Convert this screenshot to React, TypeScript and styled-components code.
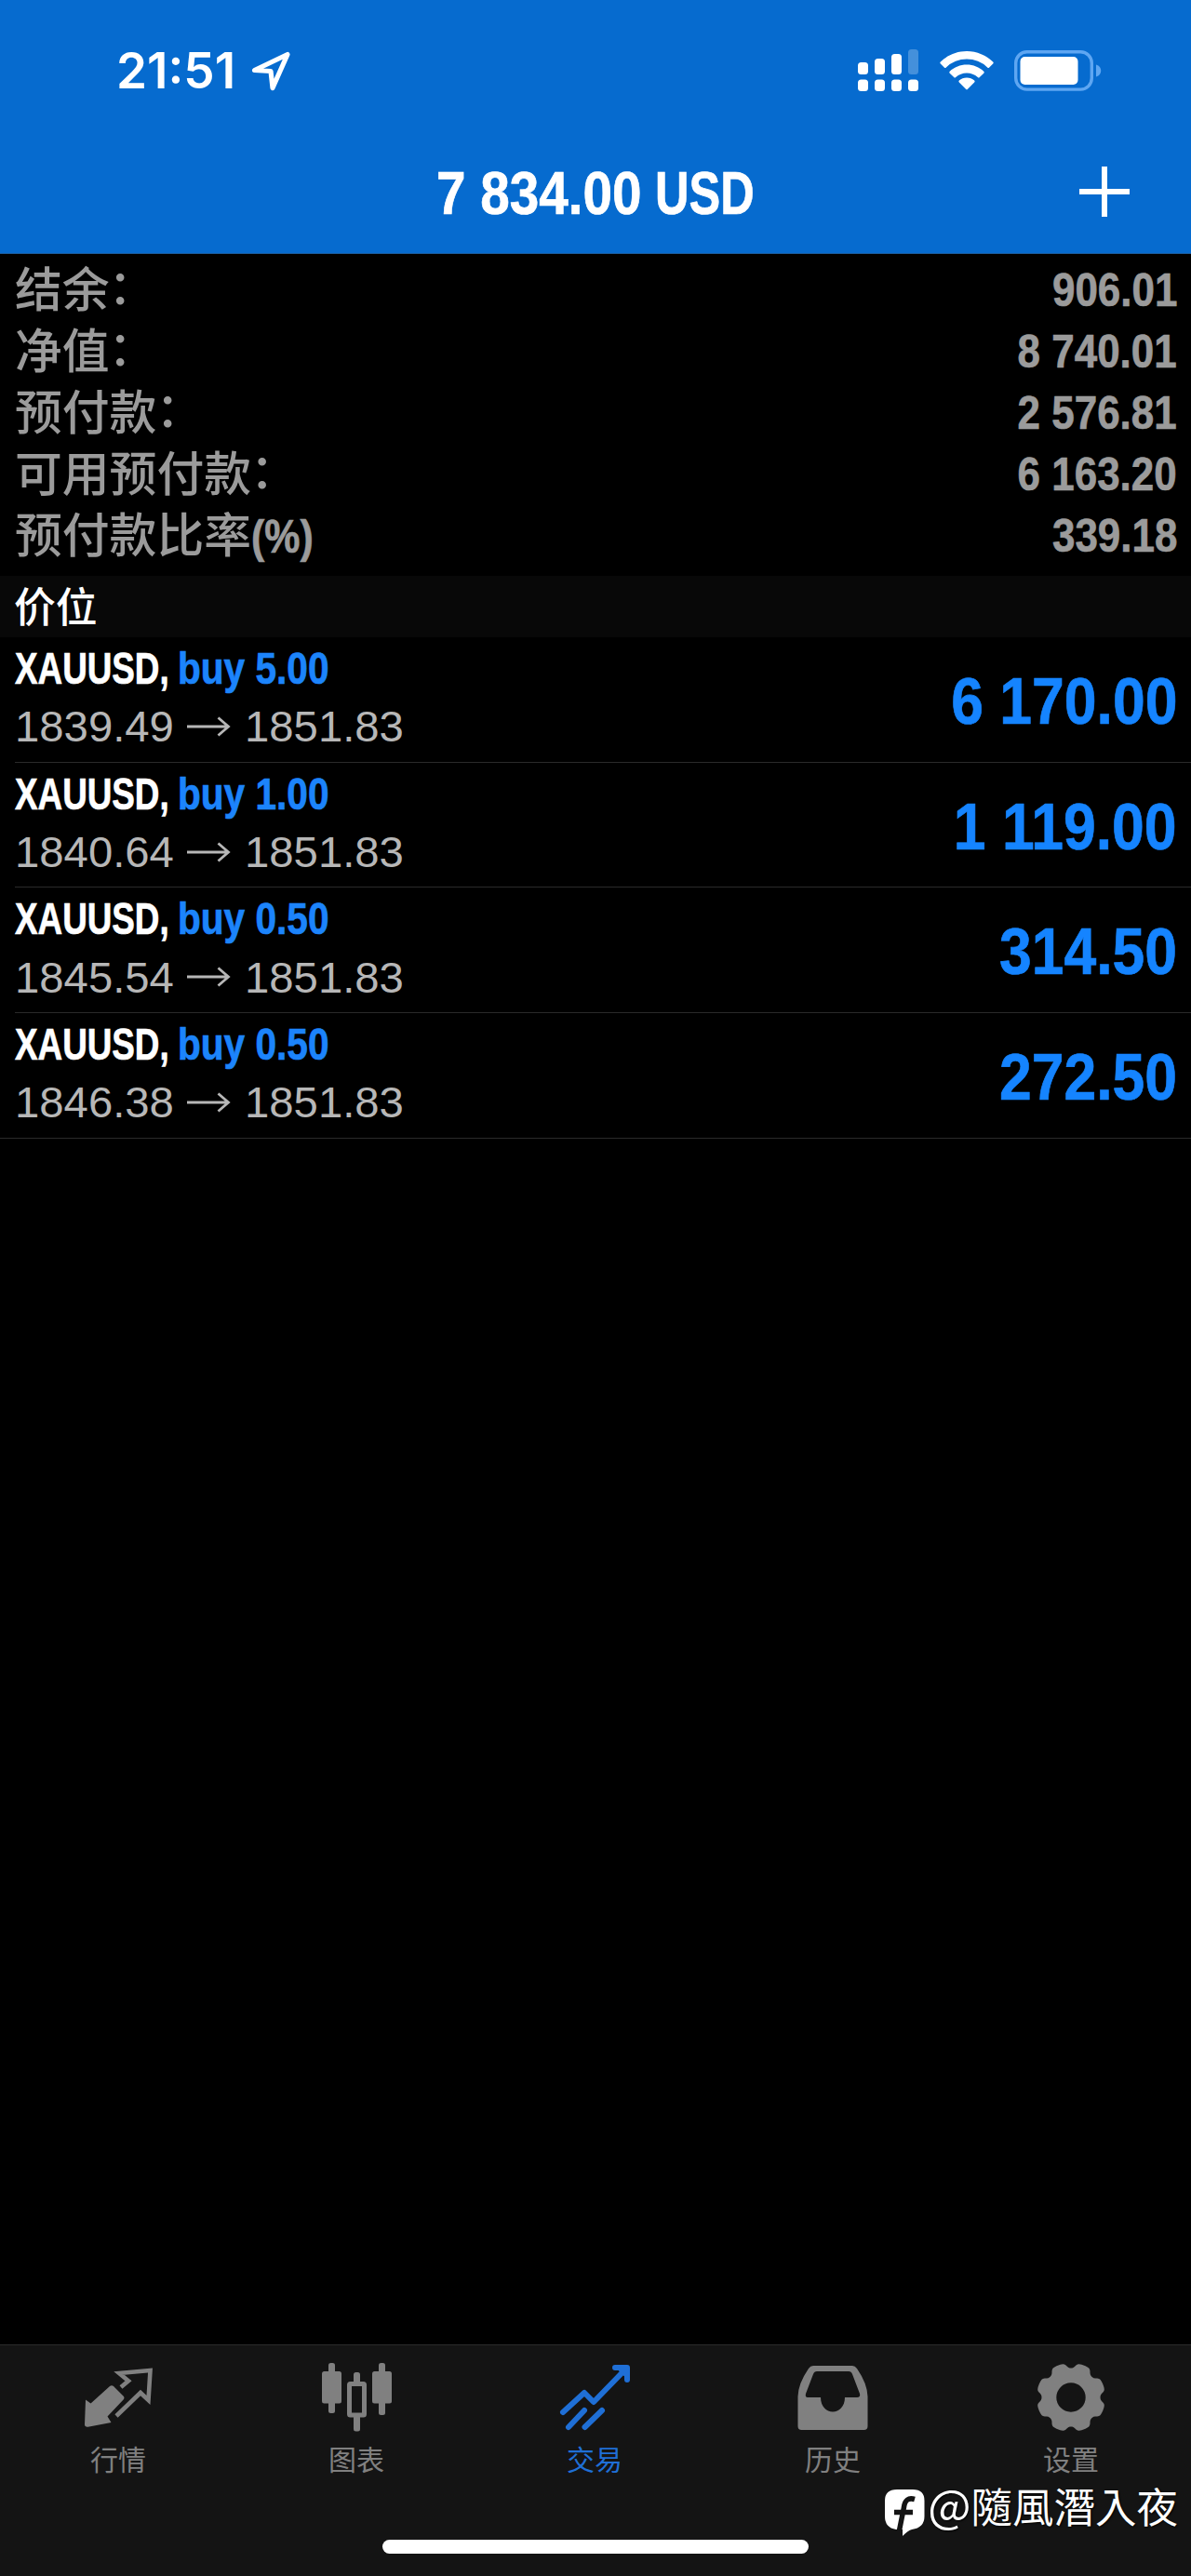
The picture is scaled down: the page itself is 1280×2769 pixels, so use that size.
import React from 'react';
import styled, { createGlobalStyle } from 'styled-components';

const GlobalStyle = createGlobalStyle`
  * { box-sizing: border-box; }
  body { margin: 0; background: #000; }
  svg { overflow: visible; flex: none; }
`;

const LATIN = '"Liberation Sans", "Noto Sans CJK SC", sans-serif';
const HAN = '"Noto Sans CJK SC", "Liberation Sans", sans-serif';

const Screen = styled.div`
  width: 1280px;
  height: 2769px;
  display: flex;
  flex-direction: column;
  background: #000;
  overflow: hidden;
  font-family: ${LATIN};
`;

const Header = styled.header`
  height: 273px;
  flex: none;
  display: flex;
  flex-direction: column;
  background: #066bcf;
  border-bottom: 1px solid #1c5c9c;
  color: #fff;
`;

const StatusBar = styled.div`
  height: 140px;
  display: flex;
  align-items: center;
  justify-content: space-between;
  padding: 12px 96px 0 125px;
`;

const StatusGroup = styled.div<{ $gap: number }>`
  display: flex;
  align-items: center;
  gap: ${(p) => p.$gap}px;
`;

const Clock = styled.span`
  width: 127px;
  font: 600 53px/60px Inter, sans-serif;
  letter-spacing: 0;
  white-space: nowrap;
`;

const NavBar = styled.div`
  height: 132px;
  display: grid;
  grid-template-columns: 1fr auto 1fr;
  align-items: center;
  padding: 0 66px;
`;

const AddButton = styled.button`
  grid-column: 3;
  justify-self: end;
  display: flex;
  padding: 0;
  border: 0;
  background: none;
  color: inherit;
`;

const Title = styled.h1`
  grid-column: 2;
  display: grid;
  grid-template-columns: 235px 105px;
  margin: 0;
  padding: 4px 3px 0 0;
`;

const Condensed = styled.span<{
  $size: number;
  $scale: number;
  $origin?: string;
  $color?: string;
  $weight?: number;
}>`
  display: inline-block;
  font-family: ${LATIN};
  font-size: ${(p) => p.$size}px;
  font-weight: ${(p) => p.$weight ?? 700};
  line-height: 1.15;
  white-space: pre;
  color: ${(p) => p.$color ?? 'inherit'};
  -webkit-text-stroke: ${(p) => (p.$weight === 400 ? 0 : 0.7)}px currentColor;
  transform: scaleX(${(p) => p.$scale});
  transform-origin: ${(p) => p.$origin ?? 'left'} center;
`;

const Profit = styled(Condensed)`
  margin-top: 5px;
`;

const Summary = styled.section`
  height: 346px;
  flex: none;
  padding: 7px 15px 0 16px;
  color: #9b9b9b;
`;

const SummaryRow = styled.div`
  height: 65.8px;
  display: flex;
  justify-content: space-between;
  align-items: center;
`;

const SummaryLabel = styled.span`
  height: 56px;
  margin-top: -9px;
  font: 500 50.8px/56px ${HAN};
  white-space: nowrap;
`;

const Colon = styled.span`
  display: inline-block;
  transform: translate(-1px, -3px);
`;

const SectionTitle = styled.h2`
  height: 66px;
  flex: none;
  margin: 0;
  padding-left: 15px;
  background: #080808;
  color: #fff;
  font: 500 44.8px/62px ${HAN};
`;

const Positions = styled.section`
  flex: 1;
`;

const Position = styled.div<{ $last: boolean }>`
  height: 134.7px;
  margin-left: ${(p) => (p.$last ? 0 : 16)}px;
  padding: 0 15px 0 ${(p) => (p.$last ? 16 : 0)}px;
  border-bottom: 1px solid #2a2a2a;
  display: flex;
  justify-content: space-between;
  align-items: center;
`;

const Details = styled.div`
  display: flex;
  flex-direction: column;
  padding-bottom: 3px;
`;

const Line = styled.div`
  height: 62px;
  display: flex;
  align-items: center;
  white-space: nowrap;
`;

const SymbolCell = styled.div`
  width: 175px;
`;

const PriceCell = styled.div`
  width: 185px;
`;

const ArrowCell = styled.div`
  width: 62px;
  display: flex;
  padding-bottom: 1px;
`;

const TabBar = styled.nav`
  height: 249px;
  flex: none;
  background: #141414;
  border-top: 1px solid #2b2b2b;
  display: flex;
  flex-direction: column;
  align-items: center;
  position: relative;
`;

const Tabs = styled.div`
  width: 1280px;
  height: 209px;
  margin-left: -2px;
  display: grid;
  grid-template-columns: repeat(5, 1fr);
`;

const Tab = styled.div<{ $active?: boolean }>`
  display: flex;
  flex-direction: column;
  align-items: center;
  padding-top: 15px;
  color: ${(p) => (p.$active ? '#1f6fd6' : '#808080')};
`;

const TabLabel = styled.span`
  margin-top: 10px;
  font: 400 30px/40px ${HAN};
`;

const HomeIndicator = styled.div`
  width: 458px;
  height: 15px;
  border-radius: 8px;
  background: #fff;
`;

const Watermark = styled.div`
  position: absolute;
  right: 14px;
  top: 138px;
  display: flex;
  align-items: flex-start;
  gap: 3px;
  color: #fff;
  font: 400 44.5px/64px "Noto Sans CJK TC", sans-serif;
  text-shadow: 1px 1px 2px #000;
  white-space: nowrap;

  svg { margin-top: 16px; }
`;

const AtSign = styled.span`
  font-size: 49px;
`;

const LocationIcon = () => (
  <svg width="44" height="52" viewBox="0 0 44 52" fill="none" stroke="#fff" strokeWidth="5.200" strokeLinejoin="round">
    <path d="M5.500 25.500 41 8.500 25 44.500 23 26.500Z" />
  </svg>
);

const SignalIcon = () => (
  <svg width="66" height="46" viewBox="0 0 66 46" fill="#fff">
    <rect x="0" y="14" width="11" height="13" rx="3.500" />
    <rect x="18" y="10" width="11" height="17" rx="3.500" />
    <rect x="36" y="5" width="11" height="22" rx="3.500" />
    <rect x="54" y="0" width="11" height="27" rx="3.500" opacity=".25" />
    {[0, 18, 36, 54].map((x) => (
      <rect key={x} x={x} y="32.500" width="11" height="12.500" rx="3.500" />
    ))}
  </svg>
);

const WifiIcon = () => (
  <svg width="58" height="42" viewBox="0 0 58 42" fill="#fff">
    <path d="M29 0C18 0 8 4.500 .8 11.500q-1 1 0 2l4 4q1 1 2 0A32 32 0 0 1 51.200 17.500q1 1 2 0l4-4q1-1 0-2C50 4.500 40 0 29 0Z" />
    <path d="M29 14.500c-7 0-13.500 2.700-18.300 7.200q-1 1 0 2l4.500 4.300q1 1 2 0a17.500 17.500 0 0 1 23.600 0q1 1 2 0l4.500-4.300q1-1 0-2C42.500 17.200 36 14.500 29 14.500Z" />
    <path d="M29 28.500c-3.200 0-6 1.200-8.200 3.100q-1 1 0 2l7.200 7.200q1 1 2 0l7.200-7.200q1-1 0-2C35 29.700 32.200 28.500 29 28.500Z" />
  </svg>
);

const BatteryIcon = () => (
  <svg width="94" height="44" viewBox="0 0 94 44" fill="none">
    <rect x="1.700" y="1.700" width="81.600" height="40.400" rx="12" stroke="#5ea6f2" strokeWidth="3.400" />
    <rect x="6.500" y="7" width="62" height="30" rx="5" fill="#fff" />
    <path d="M88 15.500c7 2 7 11 0 13Z" fill="#5ea6f2" />
  </svg>
);

const PlusIcon = () => (
  <svg width="54" height="54" viewBox="0 0 54 54" stroke="#fff" strokeWidth="6">
    <path d="M27 0V54M0 27H54" />
  </svg>
);

const ArrowIcon = () => (
  <svg width="46" height="20" viewBox="0 0 46 20" fill="none" stroke="#b7b7b7" strokeWidth="2.800">
    <path d="M0 10H44M33.500 .5 44.500 10 33.500 19.500" />
  </svg>
);

const QuotesIcon = () => (
  <svg width="76" height="76" viewBox="0 0 76 76" fill="none">
    <path d="M3 43.500 8.500 47.500 29 29Q31 27.500 33 29L44 40Q45 41.500 44 43L26.500 61.500 30.500 68 5.500 72.700Q2 73 2 70Z" fill="currentColor" />
    <path d="M41 30 49 23.300 39 15 72.500 12 70.500 44 62 36 36 61" stroke="currentColor" strokeWidth="4.600" />
  </svg>
);

const ChartsIcon = () => (
  <svg width="76" height="76" viewBox="0 0 76 76" fill="currentColor">
    <rect x="8" y="4" width="7" height="54" rx="2.500" />
    <rect x="1" y="13" width="21" height="34.500" rx="2.500" />
    <rect x="35" y="14" width="7" height="14" rx="2.500" />
    <rect x="35" y="60" width="7" height="17.500" rx="2.500" />
    <rect x="30.500" y="26.500" width="16" height="33.500" rx="1" fill="none" stroke="currentColor" strokeWidth="5" />
    <rect x="62" y="4" width="7" height="56" rx="2.500" />
    <rect x="55" y="13" width="21" height="34.500" rx="2.500" />
  </svg>
);

const TradeIcon = () => (
  <svg width="76" height="76" viewBox="0 0 76 76" fill="none" stroke="currentColor" strokeWidth="6" strokeLinecap="round" strokeLinejoin="round">
    <path d="M4 57 27 36 37 46 70 12M60 9H73V22M10 73 27 55M27.500 73 46 55" />
    <path d="M62 9H73V20Z" fill="currentColor" strokeWidth="2" />
  </svg>
);

const HistoryIcon = () => (
  <svg width="76" height="76" viewBox="0 0 76 76" fill="currentColor">
    <path
      fillRule="evenodd"
      d="M17 7H59Q62 7 64 10Q75 26 75.500 40V72Q75.500 76 71.500 76H4.500Q.5 76 .5 72V40Q1 26 12 10Q14 7 17 7ZM21 13Q18 13 17 16L9 37Q8 41 11 41H25C25 61.500 51 61.500 51 41H64Q68 41 67 37L59 16Q58 13 55 13Z"
    />
  </svg>
);

const gearOutline = () => {
  const points: string[] = [];
  for (let i = 0; i < 160; i += 1) {
    const a = (i / 160) * Math.PI * 2;
    const wave = Math.cos(8 * (a - Math.PI / 8));
    const r = 34 + 3.1 * Math.tanh((wave + 0.45) * 2);
    points.push(`${(38 + r * Math.cos(a)).toFixed(2)} ${(41 + r * Math.sin(a)).toFixed(2)}`);
  }
  return `M${points.join('L')}Z`;
};

const SettingsIcon = () => (
  <svg width="76" height="76" viewBox="0 0 76 76" fill="currentColor">
    <path fillRule="evenodd" d={`${gearOutline()}M53.700 41a15.700 15.700 0 1 0-31.400 0a15.700 15.700 0 1 0 31.400 0Z`} />
  </svg>
);

const BadgeIcon = () => (
  <svg width="44" height="52" viewBox="0 0 44 52">
    <path d="M14 1H31Q43.500 1 43.500 13V30Q43.500 42 30 44Q26 45 20 51V44H13Q1 42 1 30V13Q1 1 14 1Z" fill="#fff" />
    <path d="M33 11.500Q23 8.500 21.500 20L16.500 45M11 25.500H31" fill="none" stroke="#141414" strokeWidth="5.500" />
  </svg>
);

const summary = [
  { label: '结余', value: '906.01' },
  { label: '净值', value: '8 740.01' },
  { label: '预付款', value: '2 576.81' },
  { label: '可用预付款', value: '6 163.20' },
  { label: '预付款比率', value: '339.18', percent: true },
];

const positions = [
  { volume: '5.00', open: '1839.49', profit: '6 170.00' },
  { volume: '1.00', open: '1840.64', profit: '1 119.00' },
  { volume: '0.50', open: '1845.54', profit: '314.50' },
  { volume: '0.50', open: '1846.38', profit: '272.50' },
];

const tabs = [
  { label: '行情', Icon: QuotesIcon },
  { label: '图表', Icon: ChartsIcon },
  { label: '交易', Icon: TradeIcon, active: true },
  { label: '历史', Icon: HistoryIcon },
  { label: '设置', Icon: SettingsIcon },
];

export default function App() {
  return (
    <Screen>
      <GlobalStyle />
      <Header>
        <StatusBar>
          <StatusGroup $gap={16}>
            <Clock>21:51</Clock>
            <LocationIcon />
          </StatusGroup>
          <StatusGroup $gap={22}>
            <SignalIcon />
            <WifiIcon />
            <BatteryIcon />
          </StatusGroup>
        </StatusBar>
        <NavBar>
          <Title>
            <Condensed $size={65} $scale={0.872}>7 834.00</Condensed>
            <Condensed $size={65} $scale={0.777}>USD</Condensed>
          </Title>
          <AddButton aria-label="+">
            <PlusIcon />
          </AddButton>
        </NavBar>
      </Header>
      <Summary>
        {summary.map(({ label, value, percent }) => (
          <SummaryRow key={label}>
            <SummaryLabel>
              {label}
              {percent ? <Condensed $size={50.5} $scale={0.85}>(%)</Condensed> : <Colon>：</Colon>}
            </SummaryLabel>
            <Condensed $size={49.5} $scale={0.888} $origin="right">{value}</Condensed>
          </SummaryRow>
        ))}
      </Summary>
      <SectionTitle>价位</SectionTitle>
      <Positions>
        {positions.map((p, i) => (
          <Position key={p.open} $last={i === positions.length - 1}>
            <Details>
              <Line>
                <SymbolCell>
                  <Condensed $size={47.5} $scale={0.775} $color="#fff">XAUUSD,</Condensed>
                </SymbolCell>
                <Condensed $size={47.5} $scale={0.855} $color="#1c84fb">{`buy ${p.volume}`}</Condensed>
              </Line>
              <Line>
                <PriceCell>
                  <Condensed $size={47} $scale={1.006} $weight={400} $color="#b7b7b7">{p.open}</Condensed>
                </PriceCell>
                <ArrowCell>
                  <ArrowIcon />
                </ArrowCell>
                <Condensed $size={47} $scale={1.006} $weight={400} $color="#b7b7b7">1851.83</Condensed>
              </Line>
            </Details>
            <Profit $size={70} $scale={0.893} $origin="right" $color="#1584ff">{p.profit}</Profit>
          </Position>
        ))}
      </Positions>
      <TabBar>
        <Tabs>
          {tabs.map(({ label, Icon, active }) => (
            <Tab key={label} $active={active}>
              <Icon />
              <TabLabel>{label}</TabLabel>
            </Tab>
          ))}
        </Tabs>
        <HomeIndicator />
        <Watermark>
          <BadgeIcon />
          <span><AtSign>@</AtSign>隨風潛入夜</span>
        </Watermark>
      </TabBar>
    </Screen>
  );
}
